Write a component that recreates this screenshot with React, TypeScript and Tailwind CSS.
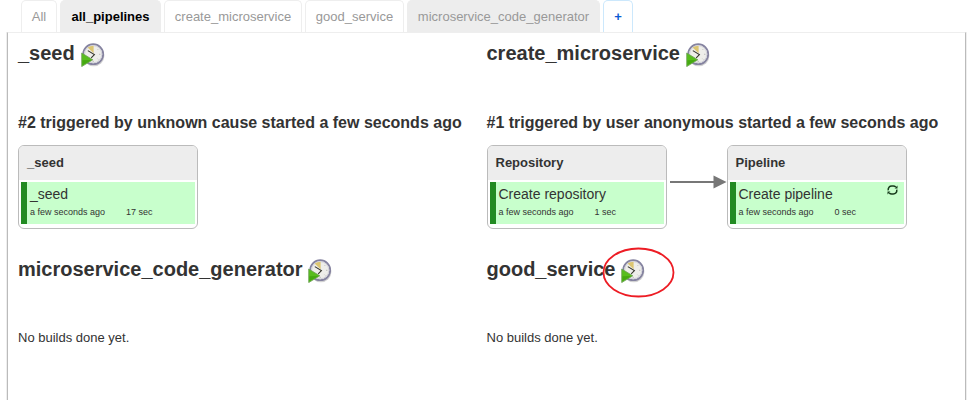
import React from "react";

function BuildIcon() {
  return (
    <svg className="ml-[5.8px] h-6 w-6 shrink-0" viewBox="0 0 24 24">
      <circle cx="12.8" cy="12.7" r="10.6" fill="#b5b5b5" opacity="0.6" />
      <circle cx="12.2" cy="11.2" r="10" fill="#eeeeea" stroke="#8583a0" strokeWidth="1.8" />
      <circle cx="12.2" cy="11.2" r="8.6" fill="none" stroke="#cfcfd8" strokeWidth="0.9" />
      <path d="M12.6 10.2 L6.6 4.6 Q9.2 3 12.6 2.8 Z" fill="#dcc672" />
      <path d="M6.8 7.6 L13.4 11.6 L10.2 14.8" fill="none" stroke="#35352c" strokeWidth="1.1" />
      <path d="M19.4 11.3h-1.3M12.2 19v-1.2M17.2 6.2l-.7.7M17.2 16.4l-.7-.7" stroke="#aaa" strokeWidth="0.8" />
      <path d="M0.7 10 L11.8 16.8 L0.7 23.6 Z" fill="#58bd1e" stroke="#6f9f58" strokeWidth="0.8" />
      <path d="M1.4 17.2 L10.4 16.9 L1.4 22.3 Z" fill="#45a811" />
    </svg>
  );
}

function RefreshIcon() {
  return (
    <svg className="absolute right-[-3px] top-[3px] h-[10px] w-[11px]" viewBox="0 0 11 10" fill="none" stroke="#173b1b" strokeWidth="1.5">
      <path d="M1.2 5.4C.9 2.6 2.4 1 4.8 1H6.3Q7.8 1 8.8 2" />
      <path d="M9.8 4.6C10.1 7.4 8.6 9 6.2 9H4.7Q3.2 9 2.2 8" />
      <path d="M10.5 .5v2.9H7.6z M.5 9.5V6.6h2.9z" fill="#173b1b" stroke="none" />
    </svg>
  );
}

function Title({ name }: { name: string }) {
  return (
    <h1 className="flex h-6 items-center text-[20px] font-bold leading-6 text-[#333]">
      <span className="-mt-1">{name}</span>
      <BuildIcon />
    </h1>
  );
}

function Stage({ name, task, duration, refresh = false }: { name: string; task: string; duration: string; refresh?: boolean }) {
  return (
    <section className="h-[84px] w-[180px] shrink-0 overflow-hidden rounded-[6px] border border-[#bbb] bg-white">
      <div className="h-[34px] bg-[#ededed] pl-2 text-[13px] font-bold leading-[33px]">{name}</div>
      <div className="mx-[2px] mt-[2px] flex h-[42px] bg-[#c8ffcc]">
        <div className="w-[6px] bg-[#228b22]" />
        <div className="relative ml-[3px] w-[156px]">
          <div className="pt-[3px] text-[14px] leading-[18px]">{task}</div>
          <div className="flex pt-[3px] text-[9px] leading-[12px]">
            <span className="w-[96px]">a few seconds ago</span>
            <span>{duration}</span>
          </div>
          {refresh && <RefreshIcon />}
        </div>
      </div>
    </section>
  );
}

const tabs = [
  { label: "All", style: "w-[36px] border-[#eee] text-[#999]" },
  { label: "all_pipelines", style: "w-[101px] border-[#ededed] bg-[#ededed] font-bold text-black" },
  { label: "create_microservice", style: "w-[138px] border-[#eee] text-[#999]" },
  { label: "good_service", style: "w-[99px] border-[#eee] text-[#999]" },
  { label: "microservice_code_generator", style: "w-[193px] border-[#ededed] bg-[#ededed] text-[#999]" },
  { label: "+", style: "w-[30px] border-[#cce8fc] font-bold text-[#0b5bd3]" },
];

export default function App() {
  return (
    <div className="relative h-[400px] w-[974px] overflow-hidden bg-white font-['Liberation_Sans',Arial,sans-serif] text-[13px] text-[#333]">
      <nav className="flex h-8 gap-[3px] pl-[21px]">
        {tabs.map((tab) => (
          <div key={tab.label} className={`h-8 rounded-t-[5px] border border-b-0 text-center leading-[31px] ${tab.style}`}>
            {tab.label}
          </div>
        ))}
      </nav>
      <main className="ml-[7px] flex h-[368px] w-[959px] border border-b-0 border-x-[#bbb] border-t-[#eee] pl-[10px] shadow-[1px_0_0_#eee,-1px_0_0_#eee]">
        <div className="w-[468.5px] shrink-0">
          <div className="pt-[10px]"><Title name="_seed" /></div>
          <h2 className="mt-[46px] text-[16px] font-bold leading-[20px]">#2 triggered by unknown cause started a few seconds ago</h2>
          <div className="mt-[12px]"><Stage name="_seed" task="_seed" duration="17 sec" /></div>
          <div className="mt-[30px]"><Title name="microservice_code_generator" /></div>
          <p className="mt-[47px] leading-4">No builds done yet.</p>
        </div>
        <div>
          <div className="pt-[10px]"><Title name="create_microservice" /></div>
          <h2 className="mt-[46px] text-[16px] font-bold leading-[20px]">#1 triggered by user anonymous started a few seconds ago</h2>
          <div className="mt-[12px] flex">
            <Stage name="Repository" task="Create repository" duration="1 sec" />
            <svg className="h-[84px] w-[60px] shrink-0" viewBox="0 0 60 84">
              <path d="M3 37h47" stroke="#777" strokeWidth="2" />
              <path d="M46.5 30.5 59.5 37 46.5 43.5Z" fill="#777" />
            </svg>
            <Stage name="Pipeline" task="Create pipeline" duration="0 sec" refresh />
          </div>
          <div className="mt-[30px]"><Title name="good_service" /></div>
          <p className="mt-[47px] leading-4">No builds done yet.</p>
        </div>
      </main>
      <svg className="pointer-events-none absolute left-[602px] top-[246px] h-[52px] w-[73px]" viewBox="0 0 73 52">
        <ellipse cx="36.5" cy="26.5" rx="35" ry="24" fill="none" stroke="#ed1c24" strokeWidth="1.8" />
      </svg>
    </div>
  );
}
